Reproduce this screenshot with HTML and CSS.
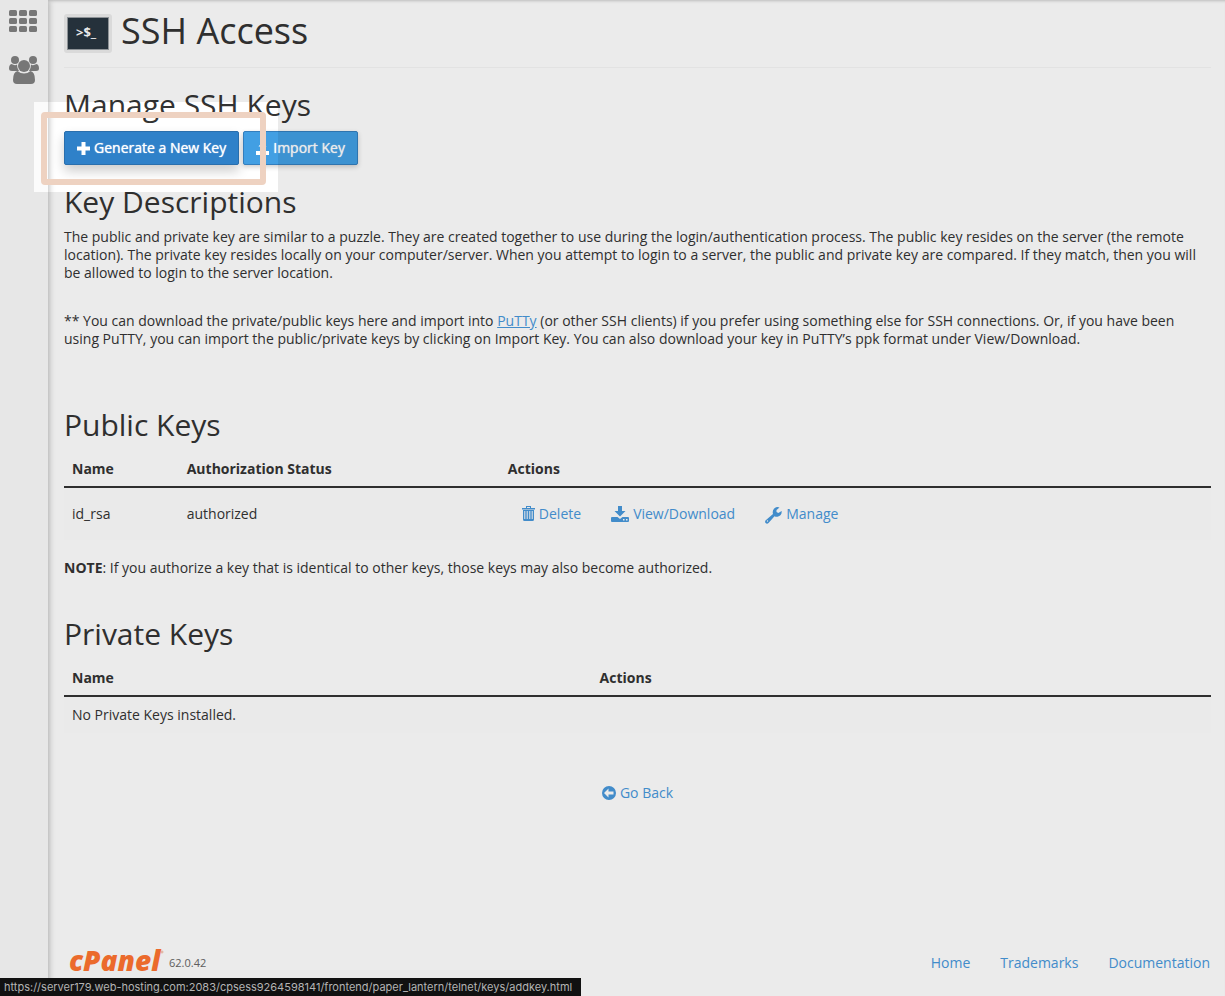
FILE: index.html
```
<!DOCTYPE html>
<html lang="en">
<head>
<meta charset="utf-8">
<title>SSH Access</title>
<link rel="stylesheet" href="styles.css">
</head>
<body>
<div class="app">
  <nav class="sidebar" aria-label="Main">
    <a href="#" class="side-link" aria-label="Applications">
      <svg width="30" height="22" viewBox="0 0 30 22"><rect width="8" height="6" rx="1.5"/><rect x="10" width="8" height="6" rx="1.5"/><rect x="20" width="8" height="6" rx="1.5"/><rect y="8" width="8" height="6" rx="1.5"/><rect x="10" y="8" width="8" height="6" rx="1.5"/><rect x="20" y="8" width="8" height="6" rx="1.5"/><rect y="16" width="8" height="6" rx="1.5"/><rect x="10" y="16" width="8" height="6" rx="1.5"/><rect x="20" y="16" width="8" height="6" rx="1.5"/></svg>
    </a>
    <a href="#" class="side-link" aria-label="Users">
      <svg width="30" height="28" viewBox="0 0 30 28"><circle cx="6" cy="4" r="4"/><circle cx="24" cy="4" r="4"/><circle cx="15" cy="10" r="6"/><path d="M2.500 8Q6 10 8 8.500Q8 12.500 10 15H3Q0 15 0 12.500Q0 8.500 2.500 8ZM27.500 8Q24 10 22 8.500Q22 12.500 20 15H27Q30 15 30 12.500Q30 8.500 27.500 8ZM8.500 15Q11.500 17.500 15 17.500T21.500 15Q26 16 26 24Q26 28 22 28H8Q4 28 4 24Q4 16 8.500 15Z"/></svg>
    </a>
  </nav>
  <div class="page">
    <main class="content">
      <header class="title-bar">
        <span class="title-icon">
          <svg width="42" height="33" viewBox="0 0 42 33"><rect width="42" height="33" fill="#9ba0a4"/><rect x="1" y="1" width="40" height="31" fill="#293641"/><text x="9" y="20" class="prompt">&gt;$_</text></svg>
        </span>
        <h1>SSH Access</h1>
      </header>

      <h2 class="h-manage">Manage SSH Keys</h2>
      <div class="buttons">
        <button type="button" class="btn btn-active"><svg width="13" height="13" viewBox="0 0 13 13"><path d="M4.500 0H8.500V4.500H13V8.500H8.500V13H4.500V8.500H0V4.500H4.500Z"/></svg>Generate a New Key</button>
        <button type="button" class="btn"><svg width="13" height="13" viewBox="0 0 13 13"><path d="M6.500 0L10.500 4.500H8.500V8.500H4.500V4.500H2.500ZM0 9H4V10H9V9H13V13H0Z"/></svg>Import Key</button>
        <div class="spotlight"><div class="frame"></div></div>
      </div>

      <h2 class="h-desc">Key Descriptions</h2>
      <p>The public and private key are similar to a puzzle. They are created together to use during the login/authentication process. The public key resides on the server (the remote location). The private key resides locally on your computer/server. When you attempt to login to a server, the public and private key are compared. If they match, then you will be allowed to login to the server location.</p>
      <p>** You can download the private/public keys here and import into <a href="#" class="inline-link">PuTTy</a> (or other SSH clients) if you prefer using something else for SSH connections. Or, if you have been using PuTTY, you can import the public/private keys by clicking on Import Key. You can also download your key in PuTTY’s ppk format under View/Download.</p>

      <h2 class="h-public">Public Keys</h2>
      <table class="public">
        <thead><tr><th class="c-name">Name</th><th class="c-status">Authorization Status</th><th>Actions</th></tr></thead>
        <tbody><tr><td>id_rsa</td><td>authorized</td><td>
          <div class="actions">
            <a href="#"><svg width="13" height="16" viewBox="0 0 13 16"><path d="M4 0H9V2H13V3.500H0V2H4ZM5 1V2H8V1ZM1 4H12V13.500Q12 15 10.500 15H2.500Q1 15 1 13.500ZM2.300 5V13H3.300V5ZM4.700 5V13H5.700V5ZM7.300 5V13H8.300V5ZM9.700 5V13H10.700V5Z" fill-rule="evenodd"/></svg>Delete</a>
            <a href="#"><svg width="18" height="16" viewBox="0 0 18 16"><path d="M7 0H11V5H14.500L9 10.500L3.500 5H7ZM1 11H6.500L9 13L11.500 11H17Q18 11 18 12V15Q18 16 17 16H1Q0 16 0 15V12Q0 11 1 11ZM12 13V14.500H13.500V13ZM15 13V14.500H16.500V13Z" fill-rule="evenodd"/></svg>View/Download</a>
            <a href="#"><svg width="17" height="20" viewBox="0 -3 17 20"><path d="M14.500 .6L11.500 3V5L13.300 6L16.700 4Q17 9 12.500 9.800Q10.800 10 9.500 9.300L3.500 16Q2 17.500 .6 16Q-.6 14.500 1 13L8 7Q7 3.500 9.500 1.300Q12-.7 14.500 .6ZM1.800 14A.7 .7 0 1 0 3.200 14A.7 .7 0 1 0 1.800 14Z" fill-rule="evenodd"/></svg>Manage</a>
          </div>
        </td></tr></tbody>
      </table>
      <p class="note"><strong>NOTE</strong>: If you authorize a key that is identical to other keys, those keys may also become authorized.</p>

      <h2 class="h-private">Private Keys</h2>
      <table>
        <thead><tr><th class="c-half">Name</th><th>Actions</th></tr></thead>
        <tbody><tr><td colspan="2">No Private Keys installed.</td></tr></tbody>
      </table>
      <div class="back"><a href="#"><svg width="14" height="14" viewBox="0 0 14 14"><path d="M7 0A7 7 0 1 1 7 14A7 7 0 1 1 7 0ZM6.500 2.500L2 7L6.500 11.500V8.500H11.500V5.500H6.500Z" fill-rule="evenodd"/></svg>Go Back</a></div>
    </main>
    <footer class="footer">
      <span class="brand"><svg width="96" height="36" viewBox="0 0 96 36" role="img" aria-label="cPanel"><text x="0" y="26" class="logo">cPanel</text><circle cx="93" cy="7" r="1" fill="none" stroke="#f4b79c"/></svg><span class="version">62.0.42</span></span>
      <nav class="foot-links" aria-label="Footer"><a href="#">Home</a><a href="#">Trademarks</a><a href="#">Documentation</a></nav>
    </footer>
  </div>
</div>
<div class="status">https://server179.web-hosting.com:2083/cpsess9264598141/frontend/paper_lantern/telnet/keys/addkey.html</div>
</body>
</html>
```
FILE: styles.css
```
* { box-sizing: border-box; }
body {
  margin: 0;
  background: #fff;
  color: #333;
  font: 14px/18px "Open Sans", "Noto Sans", sans-serif;
}
svg { fill: currentColor; flex: none; }
a { color: #4898dc; text-decoration: none; }
.inline-link { text-decoration: underline; }
.app {
  position: relative;
  display: flex;
  min-height: 100vh;
  overflow: hidden;
  box-shadow: inset 0 3px 3px -2px #ccc;
}
.sidebar {
  flex: 0 0 48px;
  display: flex;
  flex-direction: column;
  align-items: center;
  gap: 24px;
  padding-top: 10px;
  background: #fbfbfb;
  box-shadow: 1px 0 6px #bbb;
}
.side-link { display: flex; color: #828282; }
.page {
  flex: 1;
  min-width: 0;
  display: flex;
  flex-direction: column;
  padding: 0 14px 15px 16px;
}
.content { flex: 1; }
.title-bar {
  display: flex;
  align-items: center;
  gap: 9px;
  height: 68px;
  border-bottom: 1px solid #f6f6f6;
}
.title-icon {
  display: flex;
  padding: 3px;
  border-radius: 3px;
  background: #ededed;
}
.prompt { font: bold 13px "Noto Sans", "Open Sans", sans-serif; fill: #fff; }
h1, h2 { margin: 0; font-weight: 400; }
h1 { font-size: 36px; line-height: 40px; padding-bottom: 6px; }
h2 { font-size: 30px; line-height: 34px; }
.h-manage { padding-top: 20px; }
.buttons {
  position: relative;
  display: flex;
  gap: 4px;
  margin-top: 9px;
}
.btn {
  display: flex;
  align-items: center;
  gap: 4px;
  height: 34px;
  padding: 0 12px;
  border: 1px solid #347ebd;
  border-radius: 2px;
  background: #429fe3;
  color: #fff;
  font: 400 14px/18px "Open Sans", sans-serif;
  text-shadow: 0 0 1px #fff;
  box-shadow: 0 2px 5px rgba(0, 0, 0, .2);
}
.btn-active {
  border-color: #2a6fad;
  background: #2f81c9;
  box-shadow: 0 6px 12px rgba(0, 0, 0, .2);
}
.spotlight {
  position: absolute;
  z-index: 1;
  top: -29px;
  left: -30px;
  width: 244px;
  height: 90px;
  padding: 10px 12px 7px 7px;
  box-shadow: 0 0 0 3000px rgba(0, 0, 0, .08);
  pointer-events: none;
}
.frame { height: 100%; border: 6px solid #eed2c1; border-radius: 4px; }
.h-desc { margin: 20px 0 9px; }
p { margin: 0 0 30px; }
.h-public { margin: 60px 0 10px; }
table { width: 100%; border-collapse: collapse; table-layout: fixed; }
th, td { padding: 8px; text-align: left; }
th { font-weight: 700; border-bottom: 2px solid #333; }
td { padding: 9px 8px; background: #fefefe; }
.public td { padding: 16px 8px; }
.c-name { width: 10%; }
.c-status { width: 28%; }
.c-half { width: 46%; }
.actions { display: flex; gap: 30px; padding-left: 14px; }
.actions a, .back a { display: flex; align-items: center; gap: 4px; }
.note { margin: 19px 0 40px; }
.h-private { margin-bottom: 10px; }
.back { display: flex; justify-content: center; margin-top: 51px; }
.footer { display: flex; align-items: center; justify-content: space-between; }
.brand { display: flex; align-items: center; gap: 4px; padding-left: 5px; }
.logo { font: italic 800 28px "Open Sans", sans-serif; fill: #ff7430; }
.version { font-size: 11px; color: #666; }
.foot-links { display: flex; gap: 30px; padding-right: 1px; }
.status {
  position: fixed;
  z-index: 2;
  left: 0;
  bottom: 0;
  padding: 0 9px 0 4px;
  background: #111;
  color: #b4b4b4;
  font: 11px/18px Inter, sans-serif;
}
```
